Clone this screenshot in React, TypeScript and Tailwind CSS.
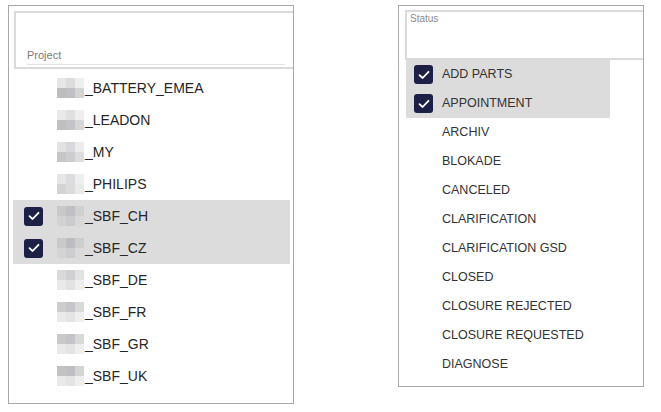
import { Fragment } from 'react';

type Mosaic = string[][];

const projects: { name: string; checked: boolean; mosaic: Mosaic }[] = [
  {
    name: '_BATTERY_EMEA',
    checked: false,
    mosaic: [
      ['#e6e6e6', '#dcdcdc', '#eeeeee'],
      ['#bdbdbd', '#c0c0c4', '#d4d4d4'],
    ],
  },
  {
    name: '_LEADON',
    checked: false,
    mosaic: [
      ['#e9e9e9', '#e0e0e0', '#efefef'],
      ['#c0c0c0', '#c4c4c8', '#d6d6d6'],
    ],
  },
  {
    name: '_MY',
    checked: false,
    mosaic: [
      ['#e2e2e2', '#d8d8dc', '#ececec'],
      ['#c6c6c6', '#cdcdd0', '#dddddd'],
    ],
  },
  {
    name: '_PHILIPS',
    checked: false,
    mosaic: [
      ['#e6e6e6', '#dcdcdf', '#eeeeee'],
      ['#d4d4d4', '#dcdcdc', '#eaeaea'],
    ],
  },
  {
    name: '_SBF_CH',
    checked: true,
    mosaic: [
      ['#c8c8c8', '#bfbfc4', '#d0d0d0'],
      ['#d2d2d2', '#cbcbce', '#d8d8d8'],
    ],
  },
  {
    name: '_SBF_CZ',
    checked: true,
    mosaic: [
      ['#cacaca', '#bdbdc1', '#cecece'],
      ['#d4d4d4', '#cdcdd0', '#dadada'],
    ],
  },
  {
    name: '_SBF_DE',
    checked: false,
    mosaic: [
      ['#d9d9d9', '#cfcfd2', '#e2e2e2'],
      ['#e9e9e9', '#e2e2e2', '#eeeeee'],
    ],
  },
  {
    name: '_SBF_FR',
    checked: false,
    mosaic: [
      ['#cdcdcd', '#c6c6ca', '#d9d9d9'],
      ['#eaeaea', '#e4e4e4', '#efefef'],
    ],
  },
  {
    name: '_SBF_GR',
    checked: false,
    mosaic: [
      ['#c9c9c9', '#c4c4c8', '#d8d8d8'],
      ['#e9e9e9', '#e4e4e4', '#efefef'],
    ],
  },
  {
    name: '_SBF_UK',
    checked: false,
    mosaic: [
      ['#c2c2c2', '#bfbfc3', '#d4d4d4'],
      ['#e9e9e9', '#e4e4e4', '#efefef'],
    ],
  },
];

const statuses: { name: string; checked: boolean }[] = [
  { name: 'ADD PARTS', checked: true },
  { name: 'APPOINTMENT', checked: true },
  { name: 'ARCHIV', checked: false },
  { name: 'BLOKADE', checked: false },
  { name: 'CANCELED', checked: false },
  { name: 'CLARIFICATION', checked: false },
  { name: 'CLARIFICATION GSD', checked: false },
  { name: 'CLOSED', checked: false },
  { name: 'CLOSURE REJECTED', checked: false },
  { name: 'CLOSURE REQUESTED', checked: false },
  { name: 'DIAGNOSE', checked: false },
];

const CheckBox = ({ checked }: { checked: boolean }) => {
  return checked ? (
    <div className="h-[19px] w-[19px] shrink-0 rounded-[3px] bg-[#1d2046] flex items-center justify-center">
      <svg width="12" height="10" viewBox="0 0 12 10" fill="none">
        <path
          d="M1.5 5.2 L4.6 8 L10.5 1.8"
          stroke="#ffffff"
          strokeWidth="1.8"
          strokeLinecap="round"
          strokeLinejoin="round"
        />
      </svg>
    </div>
  ) : (
    <div className="h-[19px] w-[19px] shrink-0" />
  );
};

const MosaicBlock = ({ mosaic }: { mosaic: Mosaic }) => {
  return (
    <div className="grid grid-cols-3 w-[27px] h-[20px] shrink-0">
      {mosaic.map((row, r) => (
        <Fragment key={`mosaic-row-${r}`}>
          {row.map((c, i) => (
            <div key={`mosaic-${r}-${i}`} style={{ backgroundColor: c }} />
          ))}
        </Fragment>
      ))}
    </div>
  );
};

const ProjectPanel = () => {
  return (
    <div className="w-[286px] h-[399px] border border-[#a8a8a8] overflow-hidden pt-[5px] bg-white">
      <div className="ml-[5px] w-[320px] h-[58px] border-2 border-[#dadada] flex flex-col justify-end pl-[11px] pb-[2px]">
        <div className="w-[258px] border-b border-[#e4e4e4] pb-[2px]">
          <div className="text-[11px] leading-[13px] text-[#7a7a7a]">
            Project
          </div>
        </div>
      </div>
      <div className="mt-[3px] ml-[4px] w-[277px]">
        {projects.map((p) => (
          <div
            key={`project-${p.name}`}
            className={`h-[32px] flex flex-row items-center pl-[11px] ${
              p.checked ? 'bg-[#dcdcdc]' : ''
            }`}
          >
            <CheckBox checked={p.checked} />
            <div className="ml-[14px]">
              <MosaicBlock mosaic={p.mosaic} />
            </div>
            <span className="ml-[1px] text-[14px] text-[#262626] leading-none">
              {p.name}
            </span>
          </div>
        ))}
      </div>
    </div>
  );
};

const StatusPanel = () => {
  return (
    <div className="w-[246px] h-[382px] border border-[#a8a8a8] overflow-hidden pt-[4px] bg-white">
      <div className="ml-[6px] w-[300px] h-[50px] border-2 border-[#dadada] pl-[3px] pt-[1px]">
        <div className="text-[10px] leading-[12px] text-[#8a8a8a]">Status</div>
      </div>
      <div className="ml-[7px] w-[204px]">
        {statuses.map((s) => (
          <div
            key={`status-${s.name}`}
            className={`h-[29px] flex flex-row items-center pl-[8px] ${
              s.checked ? 'bg-[#dcdcdc]' : ''
            }`}
          >
            <CheckBox checked={s.checked} />
            <span className="ml-[9px] text-[12.5px] text-[#333333] leading-none">
              {s.name}
            </span>
          </div>
        ))}
      </div>
    </div>
  );
};

export default function App() {
  return (
    <div className="w-[661px] h-[412px] bg-white flex flex-row items-start pl-[8px] pt-[5px] gap-[104px] font-['Liberation_Sans',Arial,sans-serif]">
      <ProjectPanel />
      <StatusPanel />
    </div>
  );
}
